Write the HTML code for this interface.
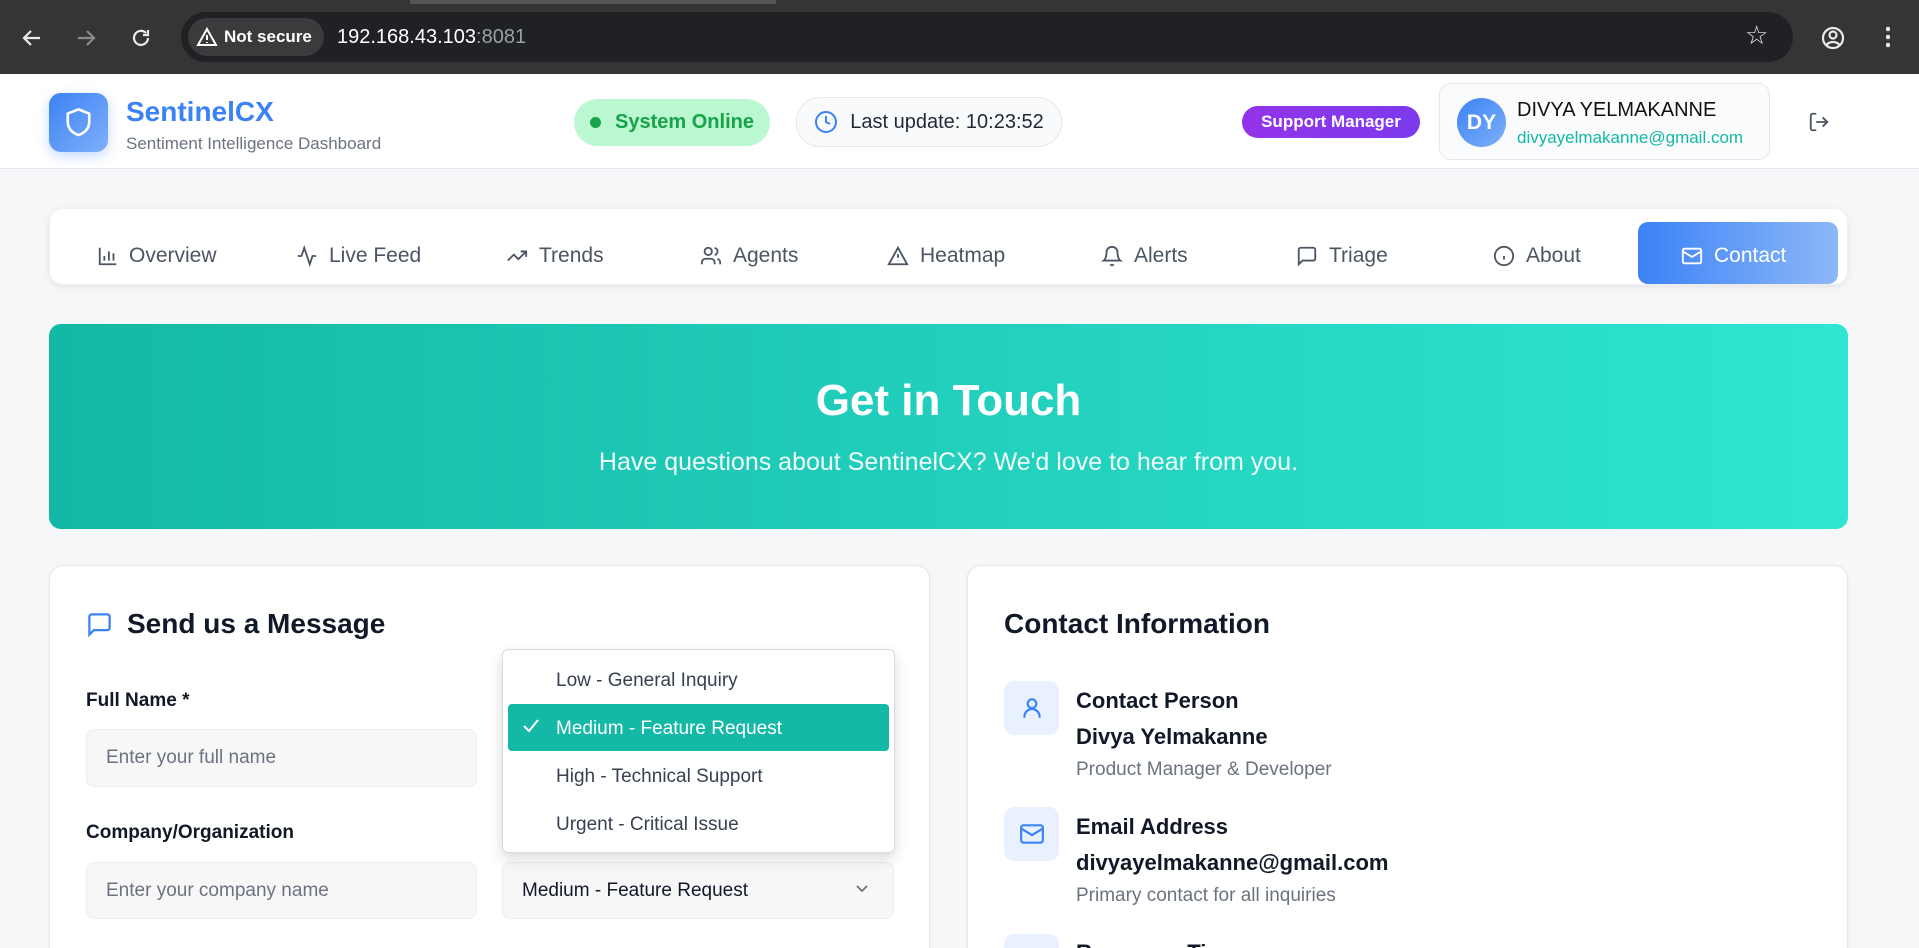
<!DOCTYPE html>
<html><head><meta charset="utf-8"><style>
*{box-sizing:border-box;margin:0;padding:0}
html,body{width:1919px;height:948px;overflow:hidden}
body{background:#f6f7f9;font-family:"Liberation Sans",sans-serif;color:#111827}
#w{position:relative;width:1919px;height:948px;overflow:hidden}
.a{position:absolute}
.chrome{left:0;top:0;width:1919px;height:74px;background:#353535}
.url{left:181px;top:12px;width:1612px;height:50px;background:#202124;border-radius:25px}
.ns{left:188px;top:18px;height:38px;width:136px;background:#3a3b3d;border-radius:19px;color:#fff;font-size:17px;font-weight:bold;line-height:38px;padding-left:36px}
.hdr{left:0;top:74px;width:1919px;height:95px;background:#fff;border-bottom:1px solid #e5e7eb}
.pill{border-radius:24px;display:flex;align-items:center;justify-content:center;font-size:20px}
.nav{left:49px;top:208px;width:1799px;height:77px;background:#fff;border-radius:14px;box-shadow:0 2px 8px rgba(0,0,0,.08);border:1px solid #eef0f3}
.ni{top:241px;height:30px;display:flex;align-items:center;gap:10px;font-size:21px;color:#4b5563}
.card{background:#fff;border:1px solid #e5e7eb;border-radius:14px;box-shadow:0 1px 4px rgba(0,0,0,.05)}
.lbl{font-size:19px;font-weight:bold;color:#111827}
.inp{background:#f7f7f8;border:1px solid #eceef1;border-radius:8px;font-size:19px;color:#6b7280;padding-left:19px;display:flex;align-items:center}
.opt{left:556px;font-size:19px;color:#374151}
.ib{width:55px;height:54px;background:#eaf1fe;border-radius:10px;display:flex;align-items:center;justify-content:center}
.t1{font-size:22px;font-weight:bold;color:#111827}
.t3{font-size:19px;color:#6b7280}
</style></head><body><div id="w">
<div class="a chrome"></div>
<div class="a" style="left:410px;top:0;width:366px;height:4px;background:#555"></div>
<svg class="a" style="left:20px;top:26px" width="24" height="24" viewBox="0 0 24 24" fill="none" stroke="#e8eaed" stroke-width="2.2"><path d="M20 12H5M11 5l-7 7 7 7"/></svg>
<svg class="a" style="left:74px;top:26px" width="24" height="24" viewBox="0 0 24 24" fill="none" stroke="#8a8b8d" stroke-width="2.2"><path d="M4 12h15M13 5l7 7-7 7"/></svg>
<svg class="a" style="left:129px;top:26px" width="24" height="24" viewBox="0 0 24 24" fill="none" stroke="#e8eaed" stroke-width="2.2"><path d="M19 12a7 7 0 1 1-2-5M19 4v5h-5"/></svg>
<div class="a url"></div>
<div class="a ns">Not secure</div>
<svg class="a" style="left:196px;top:27px" width="22" height="20" viewBox="0 0 22 20" fill="none" stroke="#fff" stroke-width="2"><path d="M11 2L2 18h18z"/><path d="M11 8v5M11 15v1"/></svg>
<div class="a" style="left:337px;top:26px;font-size:20px;color:#fff">192.168.43.103<span style="color:#9aa0a6">:8081</span></div>
<div class="a" style="left:1745px;top:20px;font-size:26px;color:#e8eaed">☆</div>
<svg class="a" style="left:1820px;top:25px" width="26" height="26" viewBox="0 0 26 26" fill="none" stroke="#e8eaed" stroke-width="2.2"><circle cx="13" cy="13" r="10"/><circle cx="13" cy="10" r="3.5"/><path d="M6.5 20c3-4 10-4 13 0"/></svg>
<div class="a" style="left:1886px;top:25px;width:4px;height:24px;background:radial-gradient(circle,#e8eaed 2px,transparent 2.5px) 0 0/4px 8px"></div>

<div class="a hdr"></div>
<div class="a" style="left:49px;top:93px;width:59px;height:59px;border-radius:12px;background:linear-gradient(135deg,#3b82f6,#7fb0f8);box-shadow:0 4px 12px rgba(59,130,246,.3)"></div>
<svg class="a" style="left:64px;top:107px" width="29" height="31" viewBox="0 0 24 26" fill="none" stroke="#fff" stroke-width="2.2" stroke-linejoin="round"><path d="M12 2l9 3.5v7c0 6-4.5 9.5-9 11-4.5-1.5-9-5-9-11v-7z"/></svg>
<div class="a" style="left:126px;top:96px;font-size:28px;font-weight:bold;color:#3b82f6">SentinelCX</div>
<div class="a" style="left:126px;top:134px;font-size:17px;color:#6b7280">Sentiment Intelligence Dashboard</div>
<div class="a pill" style="left:574px;top:99px;width:196px;height:47px;background:#bbf7d0;color:#16a34a;font-weight:bold"><span style="width:11px;height:11px;border-radius:50%;background:#16a34a;margin-right:14px"></span>System Online</div>
<div class="a pill" style="left:796px;top:97px;width:266px;height:50px;background:#f9fafb;border:1px solid #e5e7eb;color:#1f2937"><svg width="24" height="24" viewBox="0 0 24 24" fill="none" stroke="#3b82f6" stroke-width="2" style="margin-right:12px"><circle cx="12" cy="12" r="10"/><path d="M12 6v6l4 2"/></svg>Last update: 10:23:52</div>
<div class="a pill" style="left:1242px;top:106px;width:178px;height:32px;background:linear-gradient(90deg,#9333ea,#7c3aed);color:#fff;font-size:17px;font-weight:bold">Support Manager</div>
<div class="a" style="left:1439px;top:83px;width:331px;height:77px;border:1px solid #e5e7eb;border-radius:12px;background:#fafbfc"></div>
<div class="a" style="left:1457px;top:98px;width:49px;height:49px;border-radius:50%;background:linear-gradient(135deg,#3b82f6,#7fb0f8);color:#fff;font-size:21px;font-weight:bold;display:flex;align-items:center;justify-content:center">DY</div>
<div class="a" style="left:1517px;top:99px;font-size:20px;color:#111">DIVYA YELMAKANNE</div>
<div class="a" style="left:1517px;top:128px;font-size:17px;color:#14b8a6">divyayelmakanne@gmail.com</div>
<svg class="a" style="left:1808px;top:111px" width="22" height="22" viewBox="0 0 24 24" fill="none" stroke="#4b5563" stroke-width="2"><path d="M9 21H5a2 2 0 0 1-2-2V5a2 2 0 0 1 2-2h4M16 17l5-5-5-5M21 12H9"/></svg>

<div class="a nav"></div>
<div class="a ni" style="left:97px"><svg width="22" height="22" viewBox="0 0 24 24" fill="none" stroke="#4b5563" stroke-width="2"><path d="M3 3v18h18M8 17v-5M13 17V7M18 17v-8"/></svg>Overview</div>
<div class="a ni" style="left:295px"><svg width="24" height="22" viewBox="0 0 24 24" fill="none" stroke="#4b5563" stroke-width="2"><path d="M22 12h-4l-3 9L9 3l-3 9H2"/></svg>Live Feed</div>
<div class="a ni" style="left:505px"><svg width="24" height="22" viewBox="0 0 24 24" fill="none" stroke="#4b5563" stroke-width="2"><path d="M22 7l-8.5 8.5-5-5L2 17M16 7h6v6"/></svg>Trends</div>
<div class="a ni" style="left:699px"><svg width="24" height="22" viewBox="0 0 24 24" fill="none" stroke="#4b5563" stroke-width="2"><circle cx="9" cy="7" r="4"/><path d="M2 21v-2a4 4 0 0 1 4-4h6a4 4 0 0 1 4 4v2M16 3.1a4 4 0 0 1 0 7.8M22 21v-2a4 4 0 0 0-3-3.9"/></svg>Agents</div>
<div class="a ni" style="left:886px"><svg width="24" height="22" viewBox="0 0 24 24" fill="none" stroke="#4b5563" stroke-width="2"><path d="M12 3L2 21h20z"/><path d="M12 10v4M12 17v.5"/></svg>Heatmap</div>
<div class="a ni" style="left:1100px"><svg width="24" height="22" viewBox="0 0 24 24" fill="none" stroke="#4b5563" stroke-width="2"><path d="M6 8a6 6 0 0 1 12 0c0 7 3 9 3 9H3s3-2 3-9M10.3 21a1.9 1.9 0 0 0 3.4 0"/></svg>Alerts</div>
<div class="a ni" style="left:1295px"><svg width="24" height="22" viewBox="0 0 24 24" fill="none" stroke="#4b5563" stroke-width="2"><path d="M21 15a2 2 0 0 1-2 2H7l-4 4V5a2 2 0 0 1 2-2h14a2 2 0 0 1 2 2z"/></svg>Triage</div>
<div class="a ni" style="left:1492px"><svg width="24" height="22" viewBox="0 0 24 24" fill="none" stroke="#4b5563" stroke-width="2"><circle cx="12" cy="12" r="10"/><path d="M12 16v-4M12 8h.01"/></svg>About</div>
<div class="a" style="left:1638px;top:222px;width:200px;height:62px;border-radius:10px;background:linear-gradient(90deg,#3b82f6,#8db8f8)"></div>
<div class="a ni" style="left:1680px;color:#fff"><svg width="24" height="22" viewBox="0 0 24 24" fill="none" stroke="#fff" stroke-width="2"><rect x="2" y="4" width="20" height="16" rx="2"/><path d="M22 7l-10 6L2 7"/></svg>Contact</div>

<div class="a" style="left:49px;top:324px;width:1799px;height:205px;border-radius:12px;background:linear-gradient(90deg,#14b8a6,#2ee6d2)"></div>
<div class="a" style="left:49px;top:376px;width:1799px;text-align:center;color:#fff;font-size:44px;font-weight:bold">Get in Touch</div>
<div class="a" style="left:49px;top:448px;width:1799px;text-align:center;color:#f0fdfa;font-size:25px">Have questions about SentinelCX? We'd love to hear from you.</div>

<div class="a card" style="left:49px;top:565px;width:881px;height:420px"></div>
<div class="a card" style="left:967px;top:565px;width:881px;height:420px"></div>
<svg class="a" style="left:86px;top:611px" width="27" height="27" viewBox="0 0 24 24" fill="none" stroke="#3b82f6" stroke-width="2"><path d="M21 15a2 2 0 0 1-2 2H7l-4 4V5a2 2 0 0 1 2-2h14a2 2 0 0 1 2 2z"/></svg>
<div class="a" style="left:127px;top:608px;font-size:28px;font-weight:bold;color:#111827">Send us a Message</div>
<div class="a lbl" style="left:86px;top:690px">Full Name *</div>
<div class="a inp" style="left:86px;top:729px;width:391px;height:58px">Enter your full name</div>
<div class="a lbl" style="left:86px;top:822px">Company/Organization</div>
<div class="a inp" style="left:86px;top:862px;width:391px;height:57px">Enter your company name</div>
<div class="a inp" style="left:502px;top:862px;width:392px;height:57px;color:#111827">Medium - Feature Request</div>
<svg class="a" style="left:854px;top:883px" width="16" height="12" viewBox="0 0 16 12" fill="none" stroke="#6b7280" stroke-width="1.8"><path d="M3 3l5 5 5-5"/></svg>
<div class="a" style="left:502px;top:649px;width:393px;height:204px;background:#fff;border:1px solid #d8dbe0;border-radius:6px;box-shadow:0 6px 14px rgba(0,0,0,.15)"></div>
<div class="a opt" style="top:670px">Low - General Inquiry</div>
<div class="a" style="left:508px;top:704px;width:381px;height:47px;background:#14b8a6;border-radius:4px"></div>
<svg class="a" style="left:522px;top:718px" width="18" height="16" viewBox="0 0 18 16" fill="none" stroke="#fff" stroke-width="2"><path d="M2 8l5 5 9-11"/></svg>
<div class="a opt" style="top:718px;color:#fff">Medium - Feature Request</div>
<div class="a opt" style="top:766px">High - Technical Support</div>
<div class="a opt" style="top:814px">Urgent - Critical Issue</div>

<div class="a" style="left:1004px;top:608px;font-size:28px;font-weight:bold;color:#111827">Contact Information</div>
<div class="a ib" style="left:1004px;top:681px"><svg width="26" height="26" viewBox="0 0 24 24" fill="none" stroke="#3b82f6" stroke-width="2"><circle cx="12" cy="8" r="4"/><path d="M5 21v-1a7 7 0 0 1 14 0v1"/></svg></div>
<div class="a t1" style="left:1076px;top:688px">Contact Person</div>
<div class="a t1" style="left:1076px;top:724px">Divya Yelmakanne</div>
<div class="a t3" style="left:1076px;top:759px">Product Manager &amp; Developer</div>
<div class="a ib" style="left:1004px;top:807px"><svg width="28" height="26" viewBox="0 0 24 24" fill="none" stroke="#3b82f6" stroke-width="2"><rect x="2" y="4" width="20" height="16" rx="2"/><path d="M22 7l-10 6L2 7"/></svg></div>
<div class="a t1" style="left:1076px;top:814px">Email Address</div>
<div class="a t1" style="left:1076px;top:850px">divyayelmakanne@gmail.com</div>
<div class="a t3" style="left:1076px;top:885px">Primary contact for all inquiries</div>
<div class="a ib" style="left:1004px;top:934px"><svg width="26" height="26" viewBox="0 0 24 24" fill="none" stroke="#3b82f6" stroke-width="2"><circle cx="12" cy="12" r="10"/></svg></div>
<div class="a t1" style="left:1076px;top:940px">Response Time</div>
</div></body></html>
